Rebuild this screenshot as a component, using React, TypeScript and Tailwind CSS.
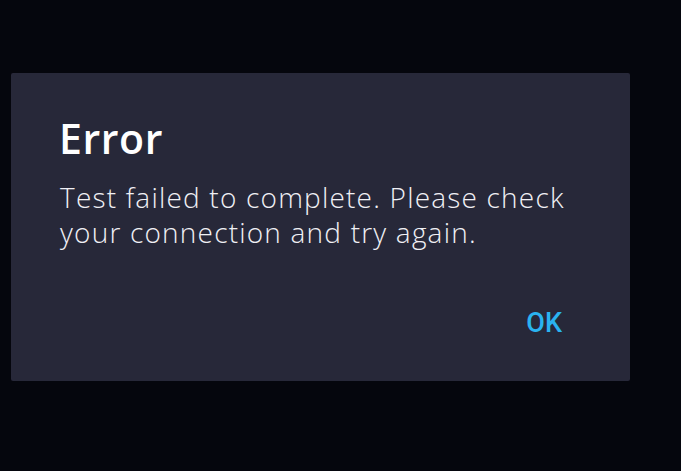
import React from "react";

export default function App() {
  return (
    <div className="min-h-[471px] w-full bg-[#05060d] pt-[73px] pl-[11px]">
      <div
        className="flex h-[308px] w-[619px] flex-col rounded-[2px] bg-[#272839] pl-[49px] pr-[40px] pt-[37px]"
        style={{ fontFamily: '"Open Sans", "Liberation Sans", sans-serif' }}
      >
        <h1 className="-ml-[1px] text-[41px] font-semibold leading-[56px] tracking-[0.6px] text-white">Error</h1>
        <p className="mt-[14px] text-[28px] font-light leading-[35px] tracking-[1.2px] text-[#f0f0f5]">
          Test failed to complete. Please check your connection and try again.
        </p>
        <div className="mt-auto mb-[44px] flex justify-end pr-[28px]">
          <button
            className="text-[27px] font-medium leading-none text-[#2ab3f0]"
            style={{ fontFamily: 'Roboto, "Liberation Sans", sans-serif' }}
          >
            OK
          </button>
        </div>
      </div>
    </div>
  );
}
